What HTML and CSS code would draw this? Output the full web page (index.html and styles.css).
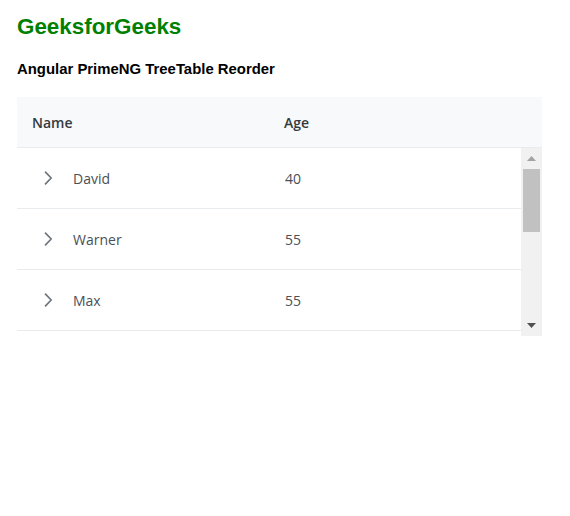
FILE: index.html
```html
<!DOCTYPE html>
<html>
<head>
<meta charset="utf-8">
<link rel="stylesheet" href="styles.css">
</head>
<body>
<div class="app">
  <h2 class="brand">GeeksforGeeks</h2>
  <h5 class="subtitle">Angular PrimeNG TreeTable Reorder</h5>
  <div class="treetable">
    <div class="thead">
      <div class="th">Name</div>
      <div class="th">Age</div>
      <div class="th-gutter"></div>
    </div>
    <div class="tbody-wrap">
      <div class="tbody">
        <div class="tr">
          <div class="td name-cell">
            <span class="toggler"><svg width="14" height="14" viewBox="0 0 14 14"><path d="M4.5 1.2 L10.2 7 L4.5 12.8" fill="none" stroke="#6c757d" stroke-width="1.7" stroke-linecap="round" stroke-linejoin="round"/></svg></span>
            <span>David</span>
          </div>
          <div class="td">40</div>
        </div>
        <div class="tr">
          <div class="td name-cell">
            <span class="toggler"><svg width="14" height="14" viewBox="0 0 14 14"><path d="M4.5 1.2 L10.2 7 L4.5 12.8" fill="none" stroke="#6c757d" stroke-width="1.7" stroke-linecap="round" stroke-linejoin="round"/></svg></span>
            <span>Warner</span>
          </div>
          <div class="td">55</div>
        </div>
        <div class="tr">
          <div class="td name-cell">
            <span class="toggler"><svg width="14" height="14" viewBox="0 0 14 14"><path d="M4.5 1.2 L10.2 7 L4.5 12.8" fill="none" stroke="#6c757d" stroke-width="1.7" stroke-linecap="round" stroke-linejoin="round"/></svg></span>
            <span>Max</span>
          </div>
          <div class="td">55</div>
        </div>
      </div>
      <div class="scrollbar">
        <div class="sb-btn"><svg width="9" height="5" viewBox="0 0 9 5"><path d="M0 5 L4.5 0 L9 5 Z" fill="#a3a3a3"/></svg></div>
        <div class="sb-track"><div class="sb-thumb"></div></div>
        <div class="sb-btn"><svg width="9" height="5" viewBox="0 0 9 5"><path d="M0 0 L9 0 L4.5 5 Z" fill="#505050"/></svg></div>
      </div>
    </div>
  </div>
</div>
</body>
</html>
```
FILE: styles.css
```css
html, body {
  margin: 0;
  padding: 0;
  background: #ffffff;
}
.app {
  padding: 0 17px;
  width: 525px;
}
.brand {
  margin: 0;
  padding-top: 14px;
  font-family: "Liberation Sans", Arial, sans-serif;
  font-weight: bold;
  font-size: 22.4px;
  line-height: 26px;
  color: #008000;
}
.subtitle {
  margin: 0;
  padding-top: 20px;
  font-family: "Liberation Sans", Arial, sans-serif;
  font-weight: bold;
  font-size: 14.9px;
  line-height: 18px;
  color: #000000;
}
.treetable {
  margin-top: 19px;
  font-family: "Open Sans", "Noto Sans", sans-serif;
  font-size: 14px;
  color: #495057;
}
.thead {
  display: flex;
  background: #f8f9fa;
  border-bottom: 1px solid #e9ecef;
  height: 50px;
}
.th {
  width: 252px;
  box-sizing: border-box;
  padding: 0 15px;
  display: flex;
  align-items: center;
  font-weight: 600;
  color: #343a40;
}
.th-gutter {
  width: 21px;
}
.tbody-wrap {
  display: flex;
  height: 188px;
  overflow: hidden;
}
.tbody {
  width: 504px;
}
.tr {
  display: flex;
  height: 60px;
  border-bottom: 1px solid #e9ecef;
}
.td {
  width: 252px;
  box-sizing: border-box;
  padding: 0 16px;
  display: flex;
  align-items: center;
}
.name-cell {
  padding-left: 16px;
}
.toggler {
  width: 32px;
  height: 32px;
  margin-right: 8px;
  display: flex;
  align-items: center;
  justify-content: center;
}
.toggler svg {
  margin-left: -3px;
}
.scrollbar {
  width: 21px;
  background: #f1f1f1;
  display: flex;
  flex-direction: column;
}
.sb-btn {
  height: 21px;
  display: flex;
  align-items: center;
  justify-content: center;
}
.sb-track {
  flex: 1;
}
.sb-thumb {
  height: 63px;
  background: #c1c1c1;
  margin: 0 2px;
}
```
